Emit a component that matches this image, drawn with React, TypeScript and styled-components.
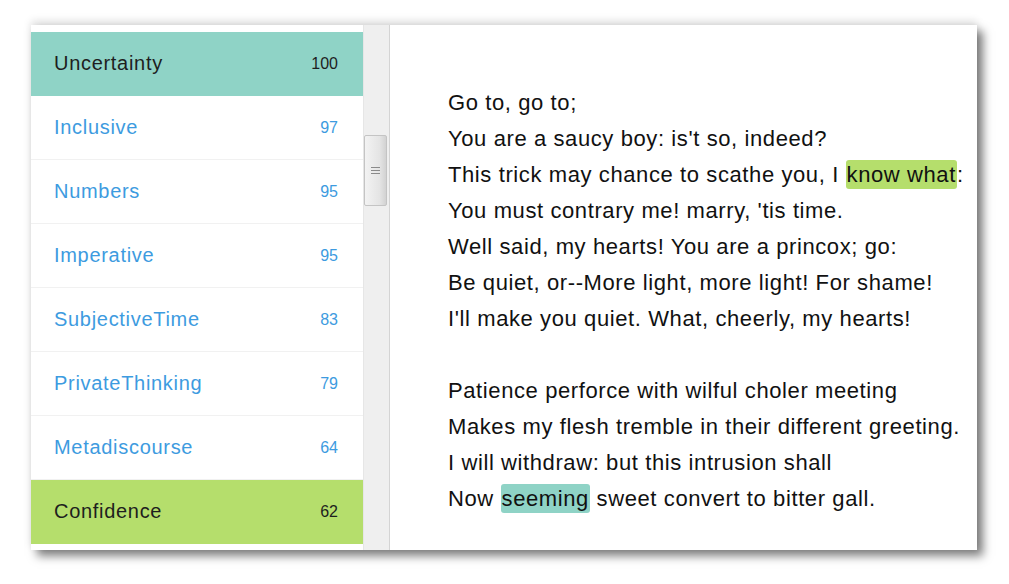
import styled, { createGlobalStyle } from "styled-components"

const GlobalStyle = createGlobalStyle`
    html, body {
        margin: 0;
        padding: 0;
        background: #ffffff;
    }
    body {
        font-family: "Liberation Sans", Arial, sans-serif;
    }
`

const Page = styled.div`
    width: 1009px;
    height: 584px;
    padding: 25px 0 0 31px;
    box-sizing: border-box;
`

const Panel = styled.div`
    display: flex;
    width: 946px;
    height: 525px;
    background: #ffffff;
    box-shadow: 0 -4px 8px rgba(0, 0, 0, 0.12), 6px 6px 9px rgba(0, 0, 0, 0.5);
`

const List = styled.div`
    width: 332px;
    padding-top: 7px;
    background: #ffffff;
    overflow: hidden;
`

const Row = styled.div<{ $bg?: string }>`
    display: flex;
    align-items: center;
    justify-content: space-between;
    height: 64px;
    padding: 0 25px 0 23px;
    box-sizing: border-box;
    background: ${p => p.$bg || "#ffffff"};
    border-bottom: 1px solid ${p => (p.$bg ? p.$bg : "#f1f1f1")};
    color: ${p => (p.$bg ? "#1e1e1e" : "#3d9be0")};
`

const Label = styled.span`
    font-size: 20px;
    letter-spacing: 0.7px;
`

const Count = styled.span`
    font-size: 16px;
`

const Scrollbar = styled.div`
    position: relative;
    width: 25px;
    background: #efefef;
    border-left: 1px solid #e6e6e6;
    border-right: 1px solid #d4d4d4;
`

const Thumb = styled.div`
    position: absolute;
    top: 110px;
    left: 0;
    width: 21px;
    height: 69px;
    background: linear-gradient(90deg, #f3f3f3 0%, #e4e4e4 70%, #d2d2d2 100%);
    border: 1px solid #c4c4c4;
    border-radius: 2px;
    display: flex;
    flex-direction: column;
    align-items: center;
    justify-content: center;
    gap: 2px;
`

const Grip = styled.div`
    width: 9px;
    height: 1px;
    background: #8a8a8a;
`

const Text = styled.div`
    flex: 1;
    padding: 60px 0 0 58px;
    color: #111111;
    font-size: 22px;
    letter-spacing: 0.6px;
    line-height: 36px;
`

const Line = styled.div`
    white-space: nowrap;
    min-height: 36px;
`

const Mark = styled.span<{ $bg: string }>`
    background: ${p => p.$bg};
    border-radius: 3px;
    padding: 2px 1px;
`

const items = [
    { name: "Uncertainty", n: 100, bg: "#8fd3c6" },
    { name: "Inclusive", n: 97 },
    { name: "Numbers", n: 95 },
    { name: "Imperative", n: 95 },
    { name: "SubjectiveTime", n: 83 },
    { name: "PrivateThinking", n: 79 },
    { name: "Metadiscourse", n: 64 },
    { name: "Confidence", n: 62, bg: "#b5de6c" },
]

const App = () => {
    return (
        <Page>
            <GlobalStyle />
            <Panel>
                <List>
                    {items.map(it => (
                        <Row key={it.name} $bg={it.bg}>
                            <Label>{it.name}</Label>
                            <Count>{it.n}</Count>
                        </Row>
                    ))}
                </List>
                <Scrollbar>
                    <Thumb>
                        <Grip />
                        <Grip />
                        <Grip />
                    </Thumb>
                </Scrollbar>
                <Text>
                    <Line>Go to, go to;</Line>
                    <Line>You are a saucy boy: is't so, indeed?</Line>
                    <Line>This trick may chance to scathe you, I <Mark $bg="#b5de6c">know what</Mark>:</Line>
                    <Line>You must contrary me! marry, 'tis time.</Line>
                    <Line>Well said, my hearts! You are a princox; go:</Line>
                    <Line>Be quiet, or--More light, more light! For shame!</Line>
                    <Line>I'll make you quiet. What, cheerly, my hearts!</Line>
                    <Line />
                    <Line>Patience perforce with wilful choler meeting</Line>
                    <Line>Makes my flesh tremble in their different greeting.</Line>
                    <Line>I will withdraw: but this intrusion shall</Line>
                    <Line>Now <Mark $bg="#8fd3c6">seeming</Mark> sweet convert to bitter gall.</Line>
                </Text>
            </Panel>
        </Page>
    )
}

export default App
